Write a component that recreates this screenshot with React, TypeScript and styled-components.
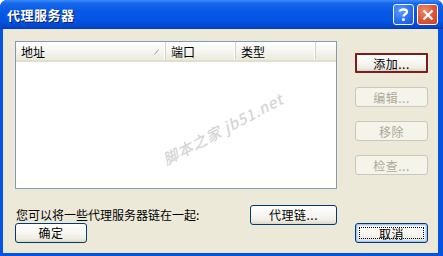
import styled, { createGlobalStyle, css } from 'styled-components';

const GlobalStyle = createGlobalStyle`
  html, body {
    margin: 0;
    padding: 0;
    background: #ffffff;
  }
  body {
    font-family: 'Noto Sans CJK SC', 'Noto Sans', sans-serif;
    font-size: 12px;
  }
`;

const Window = styled.div`
  width: 443px;
  height: 256px;
  display: flex;
  flex-direction: column;
  background: #0553e4;
  border-radius: 7px 7px 0 0;
  overflow: hidden;
  box-sizing: border-box;
`;

const TitleBar = styled.div`
  height: 29px;
  flex: none;
  display: flex;
  align-items: center;
  padding: 0 5px 0 7px;
  background: linear-gradient(
    to bottom,
    #3b8cf8 0%,
    #1667ec 12%,
    #0858e6 40%,
    #0454e4 70%,
    #0347cf 92%,
    #0238b4 100%
  );
`;

const Title = styled.div`
  flex: 1;
  color: #ffffff;
  font-weight: bold;
  font-size: 13px;
  letter-spacing: 0.5px;
  text-shadow: 1px 1px 0 #0a1e6a;
`;

const CaptionButton = styled.div<{ $kind: 'help' | 'close' }>`
  width: 21px;
  height: 21px;
  box-sizing: border-box;
  border: 1px solid #ffffff;
  border-radius: 3px;
  display: flex;
  align-items: center;
  justify-content: center;
  margin-left: 3px;
  ${(p) =>
    p.$kind === 'help'
      ? css`
          background: radial-gradient(circle at 35% 30%, #5f9bff 0%, #2a6ff5 55%, #1b55d8 100%);
        `
      : css`
          background: radial-gradient(circle at 35% 30%, #f08a6c 0%, #de5535 55%, #c8401f 100%);
        `}
`;

const Client = styled.div`
  flex: 1;
  margin: 0 5px 3px 3px;
  background: #ece9d8;
  display: grid;
  grid-template-columns: 322px 73px;
  grid-template-rows: 148px 34px 19px;
  column-gap: 18px;
  padding: 12px 10px 11px 12px;
  box-sizing: border-box;
`;

const ListView = styled.div`
  position: relative;
  background: #ffffff;
  border: 1px solid #7f9db9;
  overflow: hidden;
`;

const Header = styled.div`
  display: flex;
  height: 20px;
  background: linear-gradient(to bottom, #ffffff 0%, #f4f3ee 60%, #ebeadb 100%);
  border-bottom: 2px solid #e2decd;
  box-sizing: border-box;
`;

const HeaderCell = styled.div<{ $w?: number }>`
  position: relative;
  width: ${(p) => (p.$w ? `${p.$w}px` : 'auto')};
  flex: ${(p) => (p.$w ? 'none' : '1')};
  display: flex;
  align-items: center;
  padding-left: 5px;
  box-sizing: border-box;
  color: #000000;
  font-size: 12px;
  border-right: ${(p) => (p.$w ? '1px solid #d6d2c2' : 'none')};
  box-shadow: ${(p) => (p.$w ? 'inset -1px 0 0 #ffffff' : 'none')};
`;

const SortMark = styled.svg`
  position: absolute;
  right: 6px;
  top: 7px;
`;

const Watermark = styled.div`
  position: absolute;
  left: 140px;
  top: 76px;
  transform: rotate(-28deg);
  transform-origin: center;
  color: #d4d4d4;
  font-size: 15px;
  font-style: italic;
  white-space: nowrap;
  letter-spacing: 1px;
  text-shadow: 0 0 1px #e4e4e4;
`;

const SideButtons = styled.div`
  display: flex;
  flex-direction: column;
  gap: 14px;
  padding-top: 12px;
`;

const Button = styled.div<{ $disabled?: boolean; $marked?: boolean; $default?: boolean; $w?: number }>`
  position: relative;
  width: ${(p) => (p.$w ? `${p.$w}px` : '73px')};
  height: 20px;
  box-sizing: border-box;
  display: flex;
  align-items: center;
  justify-content: center;
  border-radius: 3px;
  font-size: 12px;
  border: 1px solid #003c74;
  color: #000000;
  background: linear-gradient(to bottom, #ffffff 0%, #f8f7f2 45%, #efede5 80%, #dcd8c8 100%);
  letter-spacing: 0.5px;
  ${(p) =>
    p.$disabled &&
    css`
      border-color: #cac8bb;
      color: #aca899;
      background: #f5f4ea;
    `}
  ${(p) =>
    p.$marked &&
    css`
      border: 2px solid #7b1d1d;
      border-radius: 1px;
    `}
  ${(p) =>
    p.$default &&
    css`
      box-shadow: inset 0 0 0 1px #a8c4ee, inset 0 0 0 2px #cde0fb;
      &::after {
        content: '';
        position: absolute;
        inset: 3px;
        border: 1px dotted #000000;
      }
    `}
`;

const ChainRow = styled.div`
  display: flex;
  align-items: center;
  justify-content: space-between;
  padding: 17px 0 0 1px;
  box-sizing: border-box;
`;

const Hint = styled.span`
  font-size: 12px;
  color: #000000;
`;

const OkCell = styled.div`
  display: flex;
  align-items: center;
`;

export default function App() {
  return (
    <>
      <GlobalStyle />
      <Window>
        <TitleBar>
          <Title>代理服务器</Title>
          <CaptionButton $kind="help">
            <svg width="13" height="15" viewBox="0 0 13 15">
              <path
                d="M3 4.5 C3 1.8 10 1.6 10 4.8 C10 7 6.5 7 6.5 9.6"
                fill="none"
                stroke="#ffffff"
                strokeWidth="2.4"
              />
              <rect x="5.2" y="11.3" width="2.6" height="2.6" fill="#ffffff" />
            </svg>
          </CaptionButton>
          <CaptionButton $kind="close">
            <svg width="12" height="12" viewBox="0 0 12 12">
              <path d="M1.5 1.5 L10.5 10.5 M10.5 1.5 L1.5 10.5" stroke="#ffffff" strokeWidth="2.2" />
            </svg>
          </CaptionButton>
        </TitleBar>
        <Client>
          <ListView>
            <Header>
              <HeaderCell $w={150}>
                地址
                <SortMark width="5" height="6" viewBox="0 0 5 6">
                  <path d="M0.5 5.5 L4.5 0.5" stroke="#a09e94" strokeWidth="1" />
                </SortMark>
              </HeaderCell>
              <HeaderCell $w={70}>端口</HeaderCell>
              <HeaderCell $w={80}>类型</HeaderCell>
              <HeaderCell />
            </Header>
            <Watermark>脚本之家 jb51.net</Watermark>
          </ListView>
          <SideButtons>
            <Button $marked>添加...</Button>
            <Button $disabled>编辑...</Button>
            <Button $disabled>移除</Button>
            <Button $disabled>检查...</Button>
          </SideButtons>
          <ChainRow>
            <Hint>您可以将一些代理服务器链在一起:</Hint>
            <Button $w={87}>代理链...</Button>
          </ChainRow>
          <div />
          <OkCell>
            <Button $w={72}>确定</Button>
          </OkCell>
          <Button $default>取消</Button>
        </Client>
      </Window>
    </>
  );
}
